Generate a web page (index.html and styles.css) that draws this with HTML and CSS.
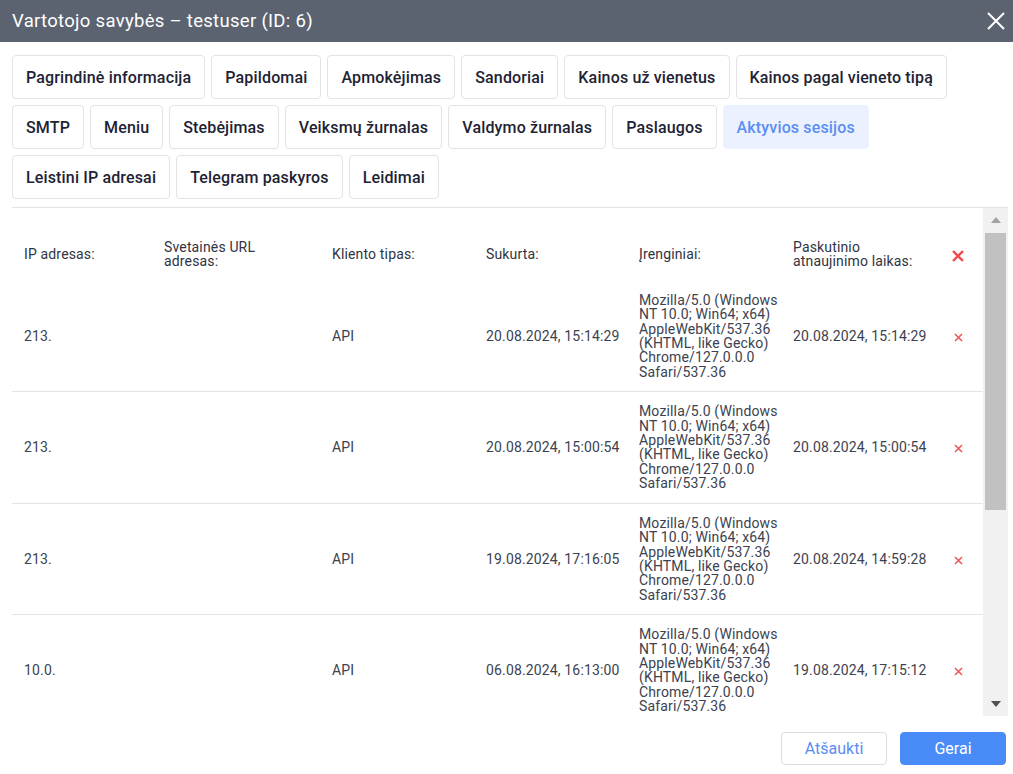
FILE: index.html
```html
<!DOCTYPE html>
<html lang="lt">
<head>
  <meta charset="UTF-8">
  <meta name="viewport" content="width=device-width, initial-scale=1.0">
  <title>Vartotojo savybės</title>
  <link rel="stylesheet" href="styles.css">
</head>
<body>
  <div class="dialog">
    <div class="dialog-header">
      <span class="dialog-title">Vartotojo savybės – testuser (ID: 6)</span>
      <button class="close-btn" aria-label="Uždaryti">
        <svg width="18" height="18" viewBox="0 0 18 18"><path d="M1 1L17 17M17 1L1 17" stroke="#fff" stroke-width="2" fill="none"/></svg>
      </button>
    </div>

    <div class="tabs">
      <button class="tab">Pagrindinė informacija</button>
      <button class="tab">Papildomai</button>
      <button class="tab">Apmokėjimas</button>
      <button class="tab">Sandoriai</button>
      <button class="tab">Kainos už vienetus</button>
      <button class="tab">Kainos pagal vieneto tipą</button>
      <button class="tab">SMTP</button>
      <button class="tab">Meniu</button>
      <button class="tab">Stebėjimas</button>
      <button class="tab">Veiksmų žurnalas</button>
      <button class="tab">Valdymo žurnalas</button>
      <button class="tab">Paslaugos</button>
      <button class="tab active">Aktyvios sesijos</button>
      <button class="tab">Leistini IP adresai</button>
      <button class="tab">Telegram paskyros</button>
      <button class="tab">Leidimai</button>
    </div>

    <div class="sessions-wrap">
      <div class="sessions">
        <table class="sessions-table">
          <colgroup>
            <col style="width:140px"><col style="width:168px"><col style="width:154px"><col style="width:153px"><col style="width:154px"><col style="width:159px"><col>
          </colgroup>
          <thead>
            <tr>
              <th>IP adresas:</th>
              <th>Svetainės URL<br>adresas:</th>
              <th>Kliento tipas:</th>
              <th>Sukurta:</th>
              <th>Įrenginiai:</th>
              <th>Paskutinio<br>atnaujinimo laikas:</th>
              <th class="del-col">
                <svg width="12" height="12" viewBox="0 0 12 12"><path d="M1 1L11 11M11 1L1 11" stroke="#f04848" stroke-width="2.4" fill="none"/></svg>
              </th>
            </tr>
          </thead>
          <tbody id="rows"></tbody>
        </table>
      </div>
      <div class="scrollbar">
        <div class="scroll-btn"><span class="arrow-up"></span></div>
        <div class="scroll-thumb"></div>
        <div class="scroll-btn"><span class="arrow-down"></span></div>
      </div>
    </div>

    <div class="dialog-footer">
      <button class="btn btn-cancel">Atšaukti</button>
      <button class="btn btn-ok">Gerai</button>
    </div>
  </div>

  <script>
    const ua = 'Mozilla/5.0 (Windows NT 10.0; Win64; x64) AppleWebKit/537.36 (KHTML, like Gecko) Chrome/127.0.0.0 Safari/537.36';
    const sessions = [
      ['213.', 'API', '20.08.2024, 15:14:29', '20.08.2024, 15:14:29'],
      ['213.', 'API', '20.08.2024, 15:00:54', '20.08.2024, 15:00:54'],
      ['213.', 'API', '19.08.2024, 17:16:05', '20.08.2024, 14:59:28'],
      ['10.0.', 'API', '06.08.2024, 16:13:00', '19.08.2024, 17:15:12']
    ];

    const tbody = document.getElementById('rows');
    sessions.forEach(s => {
      const tr = document.createElement('tr');
      tr.innerHTML = `
        <td>${s[0]}</td>
        <td></td>
        <td>${s[1]}</td>
        <td>${s[2]}</td>
        <td class="ua">${ua}</td>
        <td>${s[3]}</td>
        <td class="del-col">
          <svg width="9" height="9" viewBox="0 0 9 9"><path d="M1 1L8 8M8 1L1 8" stroke="#f05454" stroke-width="1.5" fill="none"/></svg>
        </td>`;
      tbody.appendChild(tr);
    });
  </script>
</body>
</html>
```

FILE: styles.css
```css
body {
  margin: 0;
  font-family: Roboto, "Noto Sans", sans-serif;
  background-color: #fff;
  color: #3c4250;
}

button {
  font-family: inherit;
}

.dialog {
  width: 1013px;
  height: 774px;
  display: flex;
  flex-direction: column;
  overflow: hidden;
}

.dialog-header {
  height: 42px;
  flex-shrink: 0;
  background-color: #5b6270;
  display: flex;
  align-items: center;
  justify-content: space-between;
  padding: 0 7px 0 12px;
}

.dialog-title {
  color: #fff;
  font-size: 18.5px;
  letter-spacing: 0.3px;
}

.close-btn {
  background: none;
  border: none;
  padding: 0;
  width: 20px;
  height: 20px;
  display: flex;
  align-items: center;
  justify-content: center;
  cursor: pointer;
}

.tabs {
  display: flex;
  flex-wrap: wrap;
  gap: 6px;
  padding: 13px 50px 0 12px;
}

.tab {
  height: 44px;
  padding: 0 13px;
  background-color: #fff;
  border: 1px solid #e3e3e3;
  border-radius: 4px;
  font-size: 16px;
  font-weight: 500;
  letter-spacing: 0.15px;
  color: #1d2334;
  cursor: pointer;
}

.tab.active {
  background-color: #ebf1fe;
  border-color: #ebf1fe;
  color: #5b8ef2;
}

.sessions-wrap {
  display: flex;
  height: 508px;
  margin: 8px 5px 0 12px;
  border-top: 1px solid #e4e4e4;
}

.sessions {
  flex: 1;
  overflow: hidden;
}

.scrollbar {
  width: 25px;
  flex-shrink: 0;
  background-color: #f1f1f1;
  display: flex;
  flex-direction: column;
}

.scroll-btn {
  height: 24px;
  display: flex;
  align-items: center;
  justify-content: center;
}

.scroll-btn:last-child {
  margin-top: auto;
}

.arrow-up {
  border-left: 5.5px solid transparent;
  border-right: 5.5px solid transparent;
  border-bottom: 6px solid #a3a3a3;
}

.arrow-down {
  border-left: 5.5px solid transparent;
  border-right: 5.5px solid transparent;
  border-top: 6px solid #505050;
}

.scroll-thumb {
  height: 277px;
  margin: 1px 2px 0;
  background-color: #c1c1c1;
}

.sessions-table {
  width: 100%;
  table-layout: fixed;
  border-collapse: collapse;
  font-size: 14px;
  line-height: 14.4px;
  letter-spacing: 0.15px;
}

.sessions-table th {
  text-align: left;
  font-weight: 400;
  color: #2f3442;
  padding: 32px 0 12px 12px;
  vertical-align: middle;
}

.sessions-table td {
  padding: 12px 0 12px 12px;
  height: 86px;
  vertical-align: middle;
}

.sessions-table tbody tr {
  border-bottom: 1px solid #e4e4e4;
}

.sessions-table .del-col {
  padding: 0 7px 0 0;
  text-align: center;
}

.sessions-table th.del-col {
  padding: 32px 7px 12px 0;
}

.sessions-table .del-col svg {
  display: inline-block;
  vertical-align: middle;
}

.dialog-footer {
  display: flex;
  justify-content: flex-end;
  gap: 13px;
  padding: 16px 7px 0 0;
}

.btn {
  width: 106px;
  height: 33px;
  border-radius: 4px;
  font-size: 16px;
  cursor: pointer;
}

.btn-cancel {
  background-color: #fff;
  border: 1px solid #dedede;
  color: #5b8ef2;
}

.btn-ok {
  background-color: #4a8cf7;
  border: 1px solid #4a8cf7;
  color: #fff;
}
```
